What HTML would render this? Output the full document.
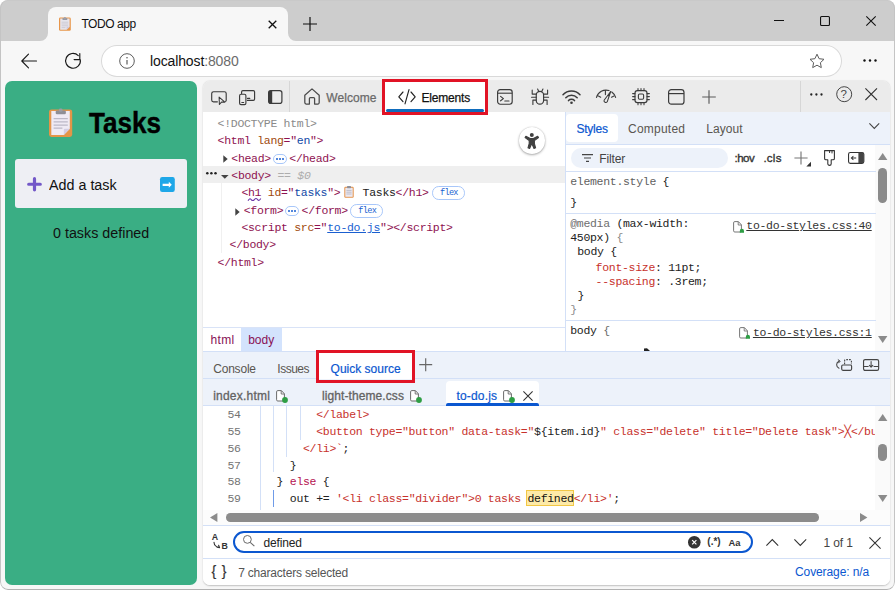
<!DOCTYPE html>
<html lang="en">
<head>
<meta charset="utf-8">
<title>TODO app</title>
<style>
*{box-sizing:border-box;margin:0;padding:0}
html,body{width:895px;height:590px;overflow:hidden;background:#fff}
body{font-family:"Liberation Sans",sans-serif;font-size:12px;color:#1b1b1b;position:relative}
.abs{position:absolute}
.t{position:absolute;white-space:pre;line-height:1}
.mono{font-family:"Liberation Mono",monospace}
svg{position:absolute;overflow:visible}
#win{position:absolute;left:0;top:0;width:895px;height:590px;background:#f7f7f7;border-radius:8px;overflow:hidden}
#winb{position:absolute;left:0;top:0;width:895px;height:590px;border-radius:8px;border:1px solid #c4c4c4;border-top-color:#c9c9c9;border-bottom-color:#b2b2b2}
.tg{color:#8e1150}.an{color:#a04a0c}.av{color:#0f48a6}.gr{color:#8a8a8a}
.rd{color:#c7312c}.dk{color:#222}
</style>
</head>
<body>
<div id="win">
<div class="abs" style="left:0px;top:0px;width:895px;height:41px;background:#cdcdcd;"></div>
<div class="abs" style="left:48px;top:7px;width:240px;height:34px;background:#f7f7f7;border-radius:8px 8px 0 0"></div>
<svg style="left:40px;top:33px;" width="8" height="8" viewBox="0 0 8 8"><path d="M8 0V8H0A8 8 0 0 0 8 0Z" fill="#f7f7f7"/></svg>
<svg style="left:288px;top:33px;" width="8" height="8" viewBox="0 0 8 8"><path d="M0 0V8H8A8 8 0 0 1 0 0Z" fill="#f7f7f7"/></svg>
<svg style="left:59px;top:17px;" width="12" height="14" viewBox="0 0 12 14"><rect x="0" y="0.6" width="11.8" height="13.2" rx="1.4" fill="#e8964a"/>
<path d="M1.2 1.6H10.6V9.8L7.6 12.8H1.2Z" fill="#e6e4ec"/>
<path d="M7.6 12.8V9.8H10.6Z" fill="#cfc9df"/>
<rect x="3.4" y="0.9" width="5" height="2" rx="0.7" fill="#9a9aa2"/>
<rect x="4.9" y="0" width="2" height="1.8" rx="0.7" fill="#a5a5ad"/>
<path d="M2.6 5.2h6.6M2.6 7h6.6M2.6 8.8h6.6M2.6 10.6h3.8" stroke="#c4c2cc" stroke-width="0.7"/></svg>
<div class="t" id="tabtitle" style="left:81.40px;top:18.24px;font-size:12px;color:#111;letter-spacing:-0.43px;">TODO app</div>
<svg style="left:268px;top:20px;" width="9" height="9" viewBox="0 0 9 9"><path d="M0.7 0.7L8.3 8.3M8.3 0.7L0.7 8.3" stroke="#111" stroke-width="1.3" fill="none"/></svg>
<svg style="left:303px;top:17px;" width="14" height="14" viewBox="0 0 14 14"><path d="M7 0V14M0 7H14" stroke="#111" stroke-width="1.2" fill="none"/></svg>
<div class="abs" style="left:774px;top:20px;width:10px;height:1px;background:#111;"></div>
<svg style="left:820px;top:16px;" width="10" height="10" viewBox="0 0 10 10"><rect x="0.55" y="0.55" width="8.9" height="8.9" rx="1" fill="none" stroke="#111" stroke-width="1.1"/></svg>
<svg style="left:866px;top:16px;" width="10" height="10" viewBox="0 0 10 10"><path d="M0.3 0.3L9.7 9.7M9.7 0.3L0.3 9.7" stroke="#111" stroke-width="1.1"/></svg>
<svg style="left:21px;top:53px;" width="16" height="16" viewBox="0 0 16 16"><path d="M15.5 8H1M7.5 1.2L0.8 8L7.5 14.8" stroke="#1a1a1a" stroke-width="1.15" fill="none" stroke-linecap="round" stroke-linejoin="round"/></svg>
<svg style="left:65px;top:53px;" width="16" height="16" viewBox="0 0 16 16"><path d="M15.33 6.77A7.4 7.4 0 1 1 13.28 2.61" stroke="#1a1a1a" stroke-width="1.15" fill="none" stroke-linecap="round"/><path d="M14.8 0.6V6.6H9.1" stroke="#1a1a1a" stroke-width="1.15" fill="none" stroke-linecap="round" stroke-linejoin="round"/></svg>
<div class="abs" style="left:101px;top:45px;width:741px;height:32px;background:#fff;border-radius:16px;box-shadow:inset 0 0 0 1px #d9d9d9"></div>
<svg style="left:119px;top:53px;" width="16" height="16" viewBox="0 0 16 16"><circle cx="8" cy="8" r="7.3" fill="none" stroke="#5c5c5c" stroke-width="1"/><path d="M8 7V11.6" stroke="#5c5c5c" stroke-width="1.2"/><circle cx="8" cy="4.8" r="0.8" fill="#5c5c5c"/></svg>
<div class="t" id="url" style="left:150.00px;top:54.15px;font-size:14px;color:#111;letter-spacing:-0.12px;">localhost<span style="color:#6b6b6b">:8080</span></div>
<svg style="left:809px;top:53px;" width="16" height="16" viewBox="0 0 16 16"><path d="M8 1.2L10.1 5.7L15 6.3L11.4 9.7L12.3 14.6L8 12.2L3.7 14.6L4.6 9.7L1 6.3L5.9 5.7Z" fill="none" stroke="#5c5c5c" stroke-width="1" stroke-linejoin="round"/></svg>
<svg style="left:863px;top:59px;" width="14" height="3" viewBox="0 0 14 3"><circle cx="1.5" cy="1.5" r="1.2" fill="#111"/><circle cx="7" cy="1.5" r="1.2" fill="#111"/><circle cx="12.5" cy="1.5" r="1.2" fill="#111"/></svg>
<div class="abs" style="left:5px;top:81px;width:192px;height:504px;background:#3aae84;border-radius:7px"></div>
<svg style="left:49px;top:108px;" width="24" height="30" viewBox="0 0 24 30"><rect x="0" y="1.4" width="23.2" height="27.6" rx="2.4" fill="#e39548"/>
<path d="M2.3 2.9H20.8V20.8L14.8 26.9H2.3Z" fill="#efeaf4"/>
<path d="M14.8 26.9V22A1.2 1.2 0 0 1 16 20.8H20.8Z" fill="#d3cde4"/>
<rect x="6.7" y="2.4" width="10.2" height="3.8" rx="1.3" fill="#8e8e96"/>
<rect x="9.9" y="0.4" width="3.6" height="3.4" rx="1.4" fill="#9c9ca4"/>
<path d="M4.6 10.6h14.2M4.6 13.8h14.2M4.6 17h14.2M4.6 20.2h8.8" stroke="#bcb8c6" stroke-width="1.25"/></svg>
<div class="t" id="h1" style="left:89.20px;top:107.07px;font-size:30.4px;color:#000;font-weight:bold;transform-origin:0 0;transform:scaleX(0.858);-webkit-text-stroke:0.4px #000;">Tasks</div>
<div class="abs" style="left:15px;top:159px;width:172px;height:49px;background:#eeeff4;border-radius:3px"></div>
<svg style="left:26.9px;top:177.4px;" width="15" height="14.5" viewBox="0 0 15 14.5"><path d="M7.5 1.7V12.8M1.7 7.25H13.3" stroke="#7358c8" stroke-width="3.2" stroke-linecap="round" fill="none"/></svg>
<div class="t" id="addtask" style="left:48.80px;top:177.36px;font-size:15.4px;color:#111;letter-spacing:0px;transform-origin:0 0;transform:scaleX(0.93);">Add a task</div>
<svg style="left:160.4px;top:177.2px;" width="14.8" height="14.9" viewBox="0 0 14.8 14.9"><rect width="14.8" height="14.9" rx="2.2" fill="#1ea7e8"/><path d="M2.6 6.7H8.8V4.8L11.8 7.8L8.8 10.8V8.9H2.6Z" fill="#fff"/></svg>
<div class="t" id="ntasks" style="left:52.80px;top:224.86px;font-size:15.4px;color:#111;letter-spacing:0px;transform-origin:0 0;transform:scaleX(0.93);">0 tasks defined</div>
<div class="abs" style="left:203px;top:81px;width:687px;height:504px;background:#fff;border-radius:7px;box-shadow:0 0.6px 1.6px rgba(0,0,0,.22)"></div>
<div class="abs" style="left:203px;top:81px;width:687px;height:31px;background:#ebebeb;border-radius:7px 7px 0 0"></div>
<svg style="left:211px;top:91px;" width="16" height="14" viewBox="0 0 16 14"><path d="M6.4 10.8H2.5A1.8 1.8 0 0 1 0.7 9V2.5A1.8 1.8 0 0 1 2.5 0.7H13.4A1.8 1.8 0 0 1 15.2 2.5V9.2A1.6 1.6 0 0 1 14.6 10.4" fill="none" stroke="#3b3b3b" stroke-width="1.15" stroke-linecap="round"/><path d="M8.1 6.1L8.4 13.5L10.5 11.1H13.9Z" fill="none" stroke="#3b3b3b" stroke-width="1.05" stroke-linejoin="round"/></svg>
<svg style="left:239px;top:90px;" width="16.4" height="15.2" viewBox="0 0 16.4 15.2"><path d="M2.6 3.6V1.9A1.3 1.3 0 0 1 3.9 0.6H14.3A1.3 1.3 0 0 1 15.6 1.9V9.1A1.3 1.3 0 0 1 14.3 10.4H8.4" fill="none" stroke="#3b3b3b" stroke-width="1.15" stroke-linecap="round"/><rect x="0.6" y="4.3" width="6.3" height="10.3" rx="1.4" fill="none" stroke="#3b3b3b" stroke-width="1.15"/><path d="M2.8 12.5H4.7M8.5 8.4H10.8" stroke="#3b3b3b" stroke-width="1.05" stroke-linecap="round"/></svg>
<svg style="left:268px;top:90px;" width="15" height="14" viewBox="0 0 15 14"><rect x="0.6" y="0.6" width="13.3" height="12.8" rx="2.2" fill="none" stroke="#3b3b3b" stroke-width="1.2"/><path d="M2.6 0.6H4.2V13.4H2.6A2 2 0 0 1 0.6 11.4V2.6A2 2 0 0 1 2.6 0.6Z" fill="#3b3b3b"/></svg>
<div class="abs" style="left:289px;top:81px;width:1px;height:31px;background:#d6d6d6;"></div>
<svg style="left:304px;top:88px;" width="16" height="17" viewBox="0 0 16 17"><path d="M0.8 7.2L8 0.9L15.2 7.2V14.6A1.4 1.4 0 0 1 13.8 16H10.6V10.6A1 1 0 0 0 9.6 9.6H6.4A1 1 0 0 0 5.4 10.6V16H2.2A1.4 1.4 0 0 1 0.8 14.6Z" fill="none" stroke="#4a4a4a" stroke-width="1.25" stroke-linejoin="round"/></svg>
<div class="t" id="welcome" style="left:326.30px;top:91.84px;font-size:12px;color:#6a6a6a;letter-spacing:0.05px;-webkit-text-stroke:0.25px #6a6a6a;">Welcome</div>
<div class="abs" style="left:385px;top:82px;width:100px;height:30px;background:#fff;"></div>
<div class="abs" style="left:386px;top:109px;width:98px;height:3px;background:#0f6cbd;border-radius:1.5px"></div>
<svg style="left:398px;top:89px;" width="18" height="15.4" viewBox="0 0 18 15.4"><path d="M5 3L0.8 7.8L5 12.6M13 3L17.2 7.8L13 12.6M11 0.6L7 14.8" fill="none" stroke="#222" stroke-width="1.15" stroke-linecap="round" stroke-linejoin="round"/></svg>
<div class="t" id="elements" style="left:421.50px;top:92.04px;font-size:12px;color:#111;letter-spacing:-0.19px;-webkit-text-stroke:0.25px #111;">Elements</div>
<svg style="left:497px;top:89px;" width="16" height="16" viewBox="0 0 16 16"><rect x="0.6" y="0.6" width="14.6" height="14.6" rx="2.6" fill="none" stroke="#3b3b3b" stroke-width="1.15"/><path d="M0.6 4.2H15.2" stroke="#3b3b3b" stroke-width="1.1"/><path d="M3.6 7.4L6.4 9.6L3.6 11.8M7.8 12H12" fill="none" stroke="#3b3b3b" stroke-width="1.15" stroke-linecap="round" stroke-linejoin="round"/></svg>
<svg style="left:531px;top:88px;" width="18" height="17" viewBox="0 0 18 17"><rect x="5.25" y="3.4" width="7.35" height="12.7" rx="3.67" fill="none" stroke="#3b3b3b" stroke-width="1.15"/><path d="M6.6 1.1L7.9 3.8M11.95 1.1L10.6 3.8M5.25 6.1H1.2V2M12.6 6.1H16.6V2M0.55 9.2H5.25M12.6 9.2H17.6M5.25 12.1H1.9V16.4M12.6 12.1H16.1V16.4" fill="none" stroke="#3b3b3b" stroke-width="1.1" stroke-linecap="round" stroke-linejoin="round"/></svg>
<svg style="left:562px;top:90px;" width="19" height="14" viewBox="0 0 19 14"><path d="M1 4.8A11.6 11.6 0 0 1 18 4.8M3.8 7.8A7.8 7.8 0 0 1 15.2 7.8M6.5 10.6A4.2 4.2 0 0 1 12.5 10.6" fill="none" stroke="#3b3b3b" stroke-width="1.5" stroke-linecap="round"/><circle cx="9.5" cy="12.7" r="1.3" fill="#3b3b3b"/></svg>
<svg style="left:596px;top:89px;" width="20" height="14" viewBox="0 0 20 14"><path d="M0.5 8.4A9.87 9.87 0 0 1 13 1.57M15.8 2.98A9.87 9.87 0 0 1 19.6 8.4" fill="none" stroke="#3b3b3b" stroke-width="1.15" stroke-linecap="round"/><path d="M9.4 1.5V5.6M2.5 7L4.7 8.2M17.95 7L15.5 8.2" fill="none" stroke="#3b3b3b" stroke-width="1.1" stroke-linecap="round"/><path d="M14.7 2.5L8.1 11.3A1.75 1.75 0 0 0 11.2 12.8Z" fill="none" stroke="#3b3b3b" stroke-width="1.05" stroke-linejoin="round"/><path d="M14.7 2.5L11.6 6.8L12.9 7.4Z" fill="#3b3b3b"/></svg>
<svg style="left:632px;top:88px;" width="18" height="17" viewBox="0 0 18 17"><rect x="3" y="2.6" width="12" height="12" rx="2.4" fill="none" stroke="#3b3b3b" stroke-width="1.15"/><rect x="6.4" y="6" width="5.2" height="5.2" rx="1.2" fill="none" stroke="#3b3b3b" stroke-width="1.1"/><path d="M6 0.4V2.6M9 0.4V2.6M12 0.4V2.6M6 14.6V16.8M9 14.6V16.8M12 14.6V16.8M0.6 5.6H3M0.6 8.6H3M0.6 11.6H3M15 5.6H17.4M15 8.6H17.4M15 11.6H17.4" stroke="#3b3b3b" stroke-width="1.05" stroke-linecap="round"/></svg>
<svg style="left:667.5px;top:89px;" width="17" height="16" viewBox="0 0 17 16"><rect x="0.6" y="0.6" width="15.4" height="14.6" rx="2.8" fill="none" stroke="#3b3b3b" stroke-width="1.2"/><path d="M0.6 4.6H16" stroke="#3b3b3b" stroke-width="1.2"/></svg>
<svg style="left:702px;top:90px;" width="14" height="14" viewBox="0 0 14 14"><path d="M7 0.2V13.8M0.2 7H13.8" stroke="#5a5a5a" stroke-width="1.15"/></svg>
<div class="abs" style="left:800px;top:81px;width:1px;height:31px;background:#d6d6d6;"></div>
<svg style="left:810px;top:92.7px;" width="13" height="3" viewBox="0 0 13 3"><circle cx="1.3" cy="1.5" r="1.15" fill="#222"/><circle cx="6.4" cy="1.5" r="1.15" fill="#222"/><circle cx="11.5" cy="1.5" r="1.15" fill="#222"/></svg>
<svg style="left:835.6px;top:86.2px;" width="16.4" height="16.4" viewBox="0 0 16.4 16.4"><circle cx="8.2" cy="8.2" r="7.5" fill="none" stroke="#444" stroke-width="1"/></svg>
<div class="t" id="help" style="left:840.60px;top:88.87px;font-size:11.5px;color:#444;">?</div>
<svg style="left:864.6px;top:87.9px;" width="12.4" height="12.4" viewBox="0 0 12.4 12.4"><path d="M0.4 0.4L12 12M12 0.4L0.4 12" stroke="#333" stroke-width="1.1"/></svg>
<div class="abs" style="left:203px;top:166px;width:362px;height:16.6px;background:#efefef;"></div>
<div class="abs" style="left:221px;top:183px;width:1px;height:69.5px;background:#f0f0f0;"></div>
<div class="t mono" id="l1" style="left:217.60px;top:117.68px;font-size:11.5px;color:#222;letter-spacing:-0.3px;"><span class="gr">&lt;!DOCTYPE html&gt;</span></div>
<div class="t mono" id="l2" style="left:217.60px;top:134.98px;font-size:11.5px;color:#222;letter-spacing:-0.3px;"><span class="tg">&lt;html </span><span class="an">lang</span><span class="tg">="</span><span class="av">en</span><span class="tg">"&gt;</span></div>
<svg style="left:222.8px;top:155.2px;" width="5" height="8" viewBox="0 0 5 8"><path d="M0.3 0.3L4.7 4L0.3 7.7Z" fill="#444"/></svg>
<div class="t mono" id="l3" style="left:231.30px;top:153.08px;font-size:11.5px;color:#222;letter-spacing:-0.3px;"><span class="tg">&lt;head&gt;</span></div>
<div class="t mono" id="l3b" style="left:289.30px;top:153.08px;font-size:11.5px;color:#222;letter-spacing:-0.3px;"><span class="tg">&lt;/head&gt;</span></div>
<div class="abs" style="left:273px;top:154px;width:14px;height:10px;background:#fff;border:1px solid #a8c7fa;border-radius:5px"></div>
<svg style="left:276px;top:158px;" width="8" height="2" viewBox="0 0 8 2"><circle cx="1" cy="1" r="1" fill="#1a5fd0"/><circle cx="4" cy="1" r="1" fill="#1a5fd0"/><circle cx="7" cy="1" r="1" fill="#1a5fd0"/></svg>
<svg style="left:205.8px;top:172.2px;" width="11" height="3" viewBox="0 0 11 3"><circle cx="1.3" cy="1.3" r="1.25" fill="#222"/><circle cx="5.4" cy="1.3" r="1.25" fill="#222"/><circle cx="9.5" cy="1.3" r="1.25" fill="#222"/></svg>
<svg style="left:221px;top:174.8px;" width="7.6" height="3.8" viewBox="0 0 7.6 3.8"><path d="M0 0.1H7.6L3.8 3.8Z" fill="#444"/></svg>
<div class="t mono" id="l4" style="left:231.30px;top:169.58px;font-size:11.5px;color:#222;letter-spacing:-0.3px;"><span class="tg">&lt;body&gt;</span><span style="color:#adadad;font-style:italic"> == $0</span></div>
<div class="t mono" id="l5" style="left:241.40px;top:186.88px;font-size:11.5px;color:#222;letter-spacing:-0.3px;"><span class="tg">&lt;h1 </span><span class="an">id</span><span class="tg">="</span><span class="av">tasks</span><span class="tg">"&gt;</span></div>
<svg style="left:248px;top:198px;" width="13" height="3.4" viewBox="0 0 13 3.4"><path d="M0 2.8Q1.6 -0.4 3.2 1.6T6.4 1.6T9.6 1.6T12.8 0.6" fill="none" stroke="#6d3aa8" stroke-width="1.05"/></svg>
<svg style="left:343.6px;top:185.8px;" width="10" height="12" viewBox="0 0 10 12"><rect x="0.3" y="0.8" width="9.4" height="11" rx="1.2" fill="#e3924b"/><rect x="1.3" y="1.8" width="7.4" height="9" fill="#ebe8f0"/><rect x="3" y="0" width="4" height="2.2" rx="0.6" fill="#8f8f98"/><path d="M2.4 4.4h5.2M2.4 6.2h5.2M2.4 8h5.2" stroke="#b4b2c0" stroke-width="0.8"/></svg>
<div class="t mono" id="l5b" style="left:362.60px;top:186.88px;font-size:11.5px;color:#222;letter-spacing:-0.3px;">Tasks<span class="tg">&lt;/h1&gt;</span></div>
<div class="abs" style="left:432px;top:186.3px;width:32.7px;height:13.5px;background:#fff;border:1px solid #a8c7fa;border-radius:6.75px"></div>
<div class="t mono" id="fx1" style="left:440.00px;top:189.00px;font-size:8.6px;color:#1a5fd0;letter-spacing:-0.7px;">flex</div>
<svg style="left:235px;top:207.6px;" width="5" height="8" viewBox="0 0 5 8"><path d="M0.3 0.3L4.7 4L0.3 7.7Z" fill="#444"/></svg>
<div class="t mono" id="l6" style="left:243.70px;top:204.98px;font-size:11.5px;color:#222;letter-spacing:-0.3px;"><span class="tg">&lt;form&gt;</span></div>
<div class="abs" style="left:284.8px;top:205.8px;width:14px;height:10px;background:#fff;border:1px solid #a8c7fa;border-radius:5px"></div>
<svg style="left:287.8px;top:209.8px;" width="8" height="2" viewBox="0 0 8 2"><circle cx="1" cy="1" r="1" fill="#1a5fd0"/><circle cx="4" cy="1" r="1" fill="#1a5fd0"/><circle cx="7" cy="1" r="1" fill="#1a5fd0"/></svg>
<div class="t mono" id="l6b" style="left:301.60px;top:204.98px;font-size:11.5px;color:#222;letter-spacing:-0.3px;"><span class="tg">&lt;/form&gt;</span></div>
<div class="abs" style="left:350.3px;top:204.3px;width:32.7px;height:13.5px;background:#fff;border:1px solid #a8c7fa;border-radius:6.75px"></div>
<div class="t mono" id="fx2" style="left:358.30px;top:207.00px;font-size:8.6px;color:#1a5fd0;letter-spacing:-0.7px;">flex</div>
<div class="t mono" id="l7" style="left:241.40px;top:221.88px;font-size:11.5px;color:#222;letter-spacing:-0.3px;"><span class="tg">&lt;script </span><span class="an">src</span><span class="tg">="</span><span style="color:#1a5fd0;text-decoration:underline">to-do.js</span><span class="tg">"&gt;&lt;/script&gt;</span></div>
<div class="t mono" id="l8" style="left:229.60px;top:238.68px;font-size:11.5px;color:#222;letter-spacing:-0.3px;"><span class="tg">&lt;/body&gt;</span></div>
<div class="t mono" id="l9" style="left:217.60px;top:257.18px;font-size:11.5px;color:#222;letter-spacing:-0.3px;"><span class="tg">&lt;/html&gt;</span></div>
<div class="abs" style="left:519px;top:127.4px;width:26.4px;height:26.4px;border-radius:50%;background:#fff;box-shadow:0 1px 2.5px rgba(0,0,0,.32),0 0 1px rgba(0,0,0,.25)"></div>
<svg style="left:524.2px;top:132.6px;" width="16" height="17" viewBox="0 0 16 17"><circle cx="7.8" cy="2.1" r="2" fill="#404040"/><path d="M1.9 3.3L6.2 5.6H9.4L13.7 3.3L14.5 4.6L10.4 7.6V10.6L11.6 14.8L10 15.4L7.8 10.6L5.6 15.4L4 14.8L5.2 10.6V7.6L1.1 4.6Z" fill="#404040" stroke="#404040" stroke-width="1.1" stroke-linejoin="round"/></svg>
<div class="abs" style="left:203px;top:327px;width:362px;height:1px;background:#d9e3f7;"></div>
<div class="abs" style="left:241.3px;top:328px;width:40.5px;height:23px;background:#d3e3fd;"></div>
<div class="t" id="bc1" style="left:210.60px;top:333.94px;font-size:12px;color:#881156;letter-spacing:0.3px;">html</div>
<div class="t" id="bc2" style="left:248.20px;top:333.94px;font-size:12px;color:#881156;">body</div>
<div class="abs" style="left:565px;top:112px;width:1px;height:239px;background:#d3e0f7;"></div>
<div class="abs" style="left:566px;top:112px;width:324px;height:32px;background:#edf2fa;"></div>
<div class="abs" style="left:566px;top:114px;width:52px;height:28px;background:#fff;border-radius:4px"></div>
<div class="t" id="st1" style="left:576.40px;top:122.64px;font-size:12px;color:#0b57d0;letter-spacing:-0.22px;-webkit-text-stroke:0.2px #0b57d0;">Styles</div>
<div class="t" id="st2" style="left:628.00px;top:122.64px;font-size:12px;color:#5a5650;letter-spacing:0.23px;">Computed</div>
<div class="t" id="st3" style="left:706.20px;top:122.64px;font-size:12px;color:#5a5650;letter-spacing:0.06px;">Layout</div>
<svg style="left:869px;top:122.6px;" width="11" height="6" viewBox="0 0 11 6"><path d="M0.4 0.4L5.3 5.4L10.2 0.4" fill="none" stroke="#444" stroke-width="1.1"/></svg>
<div class="abs" style="left:566px;top:144px;width:324px;height:1px;background:#d3e0f7;"></div>
<div class="abs" style="left:571px;top:147.8px;width:156.5px;height:20px;background:#edf2fa;border-radius:10px"></div>
<svg style="left:581.5px;top:154.2px;" width="11" height="8" viewBox="0 0 11 8"><path d="M0 0.6H11M2 4H9M4 7.4H7" stroke="#444" stroke-width="1.2"/></svg>
<div class="t" id="filter" style="left:599.30px;top:152.84px;font-size:12px;color:#444;letter-spacing:-0.12px;">Filter</div>
<div class="t" id="hov" style="left:734.40px;top:152.77px;font-size:11.5px;color:#333;letter-spacing:-0.45px;-webkit-text-stroke:0.35px #333;">:hov</div>
<div class="t" id="cls" style="left:763.40px;top:152.77px;font-size:11.5px;color:#333;letter-spacing:0.25px;-webkit-text-stroke:0.35px #333;">.cls</div>
<svg style="left:794px;top:151px;" width="17" height="16" viewBox="0 0 17 16"><path d="M7 0.4V13.6M0.4 7H13.6" stroke="#777" stroke-width="1.15"/><path d="M17 10.8V15.5H12.3Z" fill="#333"/></svg>
<svg style="left:823.5px;top:150px;" width="11" height="16" viewBox="0 0 11 16"><path d="M0.6 0.6H10.4V8.4A1.3 1.3 0 0 1 9.1 9.7H7.2V13.7A1.7 1.7 0 0 1 3.8 13.7V9.7H1.9A1.3 1.3 0 0 1 0.6 8.4Z" fill="none" stroke="#333" stroke-width="1.1" stroke-linejoin="round"/><path d="M5.6 0.6V3M8 0.6V3.4" stroke="#333" stroke-width="1"/></svg>
<svg style="left:848px;top:152.2px;" width="16.4" height="12" viewBox="0 0 16.4 12"><rect x="0.55" y="0.55" width="15.3" height="10.8" rx="1.8" fill="none" stroke="#333" stroke-width="1.1"/><path d="M10.4 0.6H14A1.8 1.8 0 0 1 15.8 2.4V9.5A1.8 1.8 0 0 1 14 11.3H10.4Z" fill="#444"/><path d="M8.2 6H3.6M5.4 4L3.4 6L5.4 8" fill="none" stroke="#333" stroke-width="1.05" /></svg>
<div class="abs" style="left:875.4px;top:145px;width:14.6px;height:206px;background:#fafafa;"></div>
<svg style="left:878px;top:152.8px;" width="9.4" height="7" viewBox="0 0 9.4 7"><path d="M0 7L4.7 0L9.4 7Z" fill="#8b8b8b"/></svg>
<div class="abs" style="left:878px;top:168px;width:8.8px;height:35px;background:#8b8b8b;border-radius:4.4px"></div>
<svg style="left:878px;top:336px;" width="9.4" height="7" viewBox="0 0 9.4 7"><path d="M0 0L4.7 7L9.4 0Z" fill="#8b8b8b"/></svg>
<div class="abs" style="left:566px;top:171px;width:310px;height:1px;background:#d3e0f7;"></div>
<div class="abs" style="left:566px;top:213px;width:310px;height:1px;background:#d3e0f7;"></div>
<div class="abs" style="left:566px;top:320px;width:310px;height:1px;background:#d3e0f7;"></div>
<div class="t mono" id="s1" style="left:570.20px;top:176.08px;font-size:11.5px;color:#222;letter-spacing:-0.3px;"><span style="color:#5f5f5f">element.style</span> {</div>
<div class="t mono" id="s2" style="left:570.20px;top:196.88px;font-size:11.5px;color:#222;letter-spacing:-0.3px;">}</div>
<div class="t mono" id="s3" style="left:570.20px;top:217.88px;font-size:11.5px;color:#222;letter-spacing:-0.3px;"><span style="color:#6e6e6e">@media</span> (max-width:</div>
<div class="t mono" id="s4" style="left:570.20px;top:231.68px;font-size:11.5px;color:#222;letter-spacing:-0.3px;">450px) <span style="color:#8a8a8a">{</span></div>
<div class="t mono" id="s5" style="left:577.20px;top:245.88px;font-size:11.5px;color:#222;letter-spacing:-0.3px;">body {</div>
<div class="t mono" id="s6" style="left:595.60px;top:261.78px;font-size:11.5px;color:#222;letter-spacing:-0.3px;"><span class="rd">font-size</span>: 11pt;</div>
<div class="t mono" id="s7" style="left:595.60px;top:275.98px;font-size:11.5px;color:#222;letter-spacing:-0.3px;"><span class="rd">--spacing</span>: .3rem;</div>
<div class="t mono" id="s8" style="left:577.60px;top:290.18px;font-size:11.5px;color:#222;letter-spacing:-0.3px;">}</div>
<div class="t mono" id="s9" style="left:570.20px;top:303.88px;font-size:11.5px;color:#222;letter-spacing:-0.3px;"><span style="color:#8a8a8a">}</span></div>
<div class="t mono" id="s10" style="left:570.20px;top:325.38px;font-size:11.5px;color:#222;letter-spacing:-0.3px;">body <span style="color:#6a6a6a">{</span></div>
<svg style="left:732.8px;top:220.6px;" width="11" height="12" viewBox="0 0 11 12"><path d="M0.6 1.8A1.2 1.2 0 0 1 1.8 0.6H5.4L8.4 3.8V9.8A1.2 1.2 0 0 1 7.2 11H1.8A1.2 1.2 0 0 1 0.6 9.8Z" fill="#fff" stroke="#666" stroke-width="0.9"/><path d="M5.2 0.8V4H8.2" fill="none" stroke="#666" stroke-width="0.8"/><path d="M6.8 11.7V9.9A2.1 2.1 0 0 1 11 9.9V11.7Z" fill="#2e9e44"/></svg>
<div class="t mono" id="lk1" style="left:746.30px;top:220.18px;font-size:11.5px;color:#222;letter-spacing:-0.3px;"><span style="color:#333;text-decoration:underline">to-do-styles.css:40</span></div>
<svg style="left:738.6px;top:327.4px;" width="11" height="12" viewBox="0 0 11 12"><path d="M0.6 1.8A1.2 1.2 0 0 1 1.8 0.6H5.4L8.4 3.8V9.8A1.2 1.2 0 0 1 7.2 11H1.8A1.2 1.2 0 0 1 0.6 9.8Z" fill="#fff" stroke="#666" stroke-width="0.9"/><path d="M5.2 0.8V4H8.2" fill="none" stroke="#666" stroke-width="0.8"/><path d="M6.8 11.7V9.9A2.1 2.1 0 0 1 11 9.9V11.7Z" fill="#2e9e44"/></svg>
<div class="t mono" id="lk2" style="left:752.90px;top:326.98px;font-size:11.5px;color:#222;letter-spacing:-0.3px;"><span style="color:#333;text-decoration:underline">to-do-styles.css:1</span></div>
<svg style="left:643.5px;top:347.6px;" width="6" height="3" viewBox="0 0 6 3"><path d="M0 3V0.4L3 0.2L6 3Z" fill="#222"/></svg>
<div class="abs" style="left:203px;top:351px;width:687px;height:55px;background:#edf2fa;"></div>
<div class="abs" style="left:203px;top:351px;width:687px;height:1px;background:#d3e0f7;"></div>
<div class="abs" style="left:203px;top:378px;width:687px;height:1px;background:#d3e0f7;"></div>
<div class="abs" style="left:203px;top:405px;width:687px;height:1px;background:#d3e0f7;"></div>
<div class="t" id="dr1" style="left:213.20px;top:363.24px;font-size:12px;color:#5a5650;letter-spacing:-0.2px;">Console</div>
<div class="t" id="dr2" style="left:277.30px;top:363.24px;font-size:12px;color:#5a5650;letter-spacing:-0.5px;">Issues</div>
<div class="abs" style="left:319px;top:353px;width:93px;height:26.4px;background:#fff;"></div>
<div class="t" id="dr3" style="left:330.60px;top:363.24px;font-size:12px;color:#0b57d0;-webkit-text-stroke:0.2px #0b57d0;">Quick source</div>
<svg style="left:419.4px;top:358px;" width="13.4" height="13.4" viewBox="0 0 13.4 13.4"><path d="M6.7 0.2V13.2M0.2 6.7H13.2" stroke="#666" stroke-width="1.15"/></svg>
<svg style="left:836px;top:359px;" width="16" height="12" viewBox="0 0 16 12"><path d="M8.6 5.2V1.7A1.1 1.1 0 0 1 9.7 0.6H14.3A1.1 1.1 0 0 1 15.4 1.7V5.2" fill="none" stroke="#444" stroke-width="1.1" stroke-dasharray="1.7 1.1"/><rect x="5.7" y="6" width="9.9" height="5.3" rx="1.2" fill="none" stroke="#444" stroke-width="1.15"/><path d="M3 9.2A3.7 3.7 0 0 1 3 2.3" fill="none" stroke="#444" stroke-width="1.05" stroke-linecap="round"/><path d="M2.2 0.8L4.2 2.2L2.6 3.9" fill="none" stroke="#444" stroke-width="1" stroke-linecap="round" stroke-linejoin="round"/></svg>
<svg style="left:863px;top:359px;" width="16.2" height="12" viewBox="0 0 16.2 12"><rect x="0.55" y="0.55" width="15.1" height="10.9" rx="1.6" fill="none" stroke="#444" stroke-width="1.15"/><path d="M0.6 7.5H5.6M10.6 7.5H15.6" stroke="#444" stroke-width="1.1"/><path d="M8.1 2.6V8M6.4 6.4L8.1 8.2L9.8 6.4" fill="none" stroke="#444" stroke-width="1.05" stroke-linecap="round" stroke-linejoin="round"/></svg>
<div class="t" id="ft1" style="left:213.20px;top:390.04px;font-size:12px;color:#636363;letter-spacing:0.22px;-webkit-text-stroke:0.3px #636363;">index.html</div>
<svg style="left:276px;top:389.8px;" width="10" height="12" viewBox="0 0 10 12"><path d="M0.6 1.8A1.2 1.2 0 0 1 1.8 0.6H5.4L8.4 3.8V9.8A1.2 1.2 0 0 1 7.2 11H1.8A1.2 1.2 0 0 1 0.6 9.8Z" fill="#fff" stroke="#6a6a6a" stroke-width="1"/><path d="M5.2 0.8V4H8.2" fill="none" stroke="#6a6a6a" stroke-width="0.9"/></svg>
<svg style="left:282.4px;top:397.2px;" width="6" height="6" viewBox="0 0 6 6"><circle cx="3" cy="3" r="2.9" fill="#2e9e44"/></svg>
<div class="t" id="ft2" style="left:322.00px;top:390.04px;font-size:12px;color:#636363;letter-spacing:0.09px;-webkit-text-stroke:0.3px #636363;">light-theme.css</div>
<svg style="left:409.6px;top:389.8px;" width="10" height="12" viewBox="0 0 10 12"><path d="M0.6 1.8A1.2 1.2 0 0 1 1.8 0.6H5.4L8.4 3.8V9.8A1.2 1.2 0 0 1 7.2 11H1.8A1.2 1.2 0 0 1 0.6 9.8Z" fill="#fff" stroke="#6a6a6a" stroke-width="1"/><path d="M5.2 0.8V4H8.2" fill="none" stroke="#6a6a6a" stroke-width="0.9"/></svg>
<svg style="left:416.0px;top:397.2px;" width="6" height="6" viewBox="0 0 6 6"><circle cx="3" cy="3" r="2.9" fill="#2e9e44"/></svg>
<div class="abs" style="left:446.3px;top:380.6px;width:92.5px;height:24.4px;background:#fff;border-radius:4px 4px 0 0"></div>
<div class="abs" style="left:446.3px;top:402.6px;width:92.5px;height:3.2px;background:#0b57d0;border-radius:2px 2px 0 0"></div>
<div class="t" id="ft3" style="left:456.40px;top:390.04px;font-size:12px;color:#0b57d0;letter-spacing:0.19px;-webkit-text-stroke:0.2px #0b57d0;">to-do.js</div>
<svg style="left:503px;top:389.8px;" width="10" height="12" viewBox="0 0 10 12"><path d="M0.6 1.8A1.2 1.2 0 0 1 1.8 0.6H5.4L8.4 3.8V9.8A1.2 1.2 0 0 1 7.2 11H1.8A1.2 1.2 0 0 1 0.6 9.8Z" fill="#fff" stroke="#6a6a6a" stroke-width="1"/><path d="M5.2 0.8V4H8.2" fill="none" stroke="#6a6a6a" stroke-width="0.9"/></svg>
<svg style="left:509.4px;top:397.2px;" width="6" height="6" viewBox="0 0 6 6"><circle cx="3" cy="3" r="2.9" fill="#2e9e44"/></svg>
<svg style="left:523px;top:390.6px;" width="10" height="10" viewBox="0 0 10 10"><path d="M0.4 0.4L9.6 9.6M9.6 0.4L0.4 9.6" stroke="#333" stroke-width="1.05"/></svg>
<div class="abs" style="left:203px;top:406px;width:687px;height:104px;background:#fff;"></div>
<div class="abs" style="left:260px;top:406px;width:1px;height:104px;background:#d3e0f7;"></div>
<div class="abs" style="left:273.3px;top:406px;width:1px;height:66px;background:#d3e0f7;"></div>
<div class="abs" style="left:286px;top:406px;width:1px;height:50.5px;background:#d3e0f7;"></div>
<div class="abs" style="left:300px;top:406px;width:1px;height:33.7px;background:#d3e0f7;"></div>
<div class="abs" style="left:273.3px;top:490px;width:1px;height:17px;background:#6f9be8;"></div>
<div class="t mono" id="n54" style="left:227.40px;top:409.18px;font-size:11.5px;color:#747474;letter-spacing:-0.3px;">54</div>
<div class="t mono" id="n55" style="left:227.40px;top:426.18px;font-size:11.5px;color:#747474;letter-spacing:-0.3px;">55</div>
<div class="t mono" id="n56" style="left:227.40px;top:443.18px;font-size:11.5px;color:#747474;letter-spacing:-0.3px;">56</div>
<div class="t mono" id="n57" style="left:227.40px;top:460.18px;font-size:11.5px;color:#747474;letter-spacing:-0.3px;">57</div>
<div class="t mono" id="n58" style="left:227.40px;top:476.18px;font-size:11.5px;color:#747474;letter-spacing:-0.3px;">58</div>
<div class="t mono" id="n59" style="left:227.40px;top:493.18px;font-size:11.5px;color:#747474;letter-spacing:-0.3px;">59</div>
<div class="t mono" id="c54" style="left:316.20px;top:409.18px;font-size:11.5px;color:#222;letter-spacing:-0.3px;"><span class="rd">&lt;/label&gt;</span></div>
<div class="t mono" id="c55" style="left:316.20px;top:426.18px;font-size:11.5px;color:#222;letter-spacing:-0.3px;"><span class="rd">&lt;button type="button" data-task="</span>${item.id}<span class="rd">" class="delete" title="Delete task"&gt;╳&lt;/bu</span></div>
<div class="t mono" id="c56" style="left:303.00px;top:443.18px;font-size:11.5px;color:#222;letter-spacing:-0.3px;"><span class="rd">&lt;/li&gt;`</span>;</div>
<div class="t mono" id="c57" style="left:289.80px;top:460.18px;font-size:11.5px;color:#222;letter-spacing:-0.3px;">}</div>
<div class="t mono" id="c58" style="left:276.60px;top:476.18px;font-size:11.5px;color:#222;letter-spacing:-0.3px;">} <span style="color:#b5124f">else</span> {</div>
<div class="abs" style="left:526.4px;top:490px;width:47.6px;height:15.8px;background:#fdeaa8;border:1px solid #f2c744"></div>
<div class="t mono" id="c59" style="left:289.80px;top:493.18px;font-size:11.5px;color:#222;letter-spacing:-0.3px;">out += <span class="rd">'&lt;li class="divider"&gt;0 tasks </span><span style="color:#111">defined</span><span class="rd">&lt;/li&gt;'</span>;</div>
<div class="abs" style="left:875.4px;top:406px;width:14.6px;height:104px;background:#fafafa;"></div>
<svg style="left:878px;top:413.6px;" width="9.4" height="7" viewBox="0 0 9.4 7"><path d="M0 7L4.7 0L9.4 7Z" fill="#8b8b8b"/></svg>
<div class="abs" style="left:878px;top:443.5px;width:8.8px;height:17px;background:#8b8b8b;border-radius:4.4px"></div>
<svg style="left:878px;top:495px;" width="9.4" height="7" viewBox="0 0 9.4 7"><path d="M0 0L4.7 7L9.4 0Z" fill="#8b8b8b"/></svg>
<div class="abs" style="left:203px;top:510px;width:687px;height:15px;background:#fcfcfc;"></div>
<svg style="left:210.4px;top:513px;" width="7.4" height="9" viewBox="0 0 7.4 9"><path d="M7.4 0L0 4.5L7.4 9Z" fill="#8b8b8b"/></svg>
<div class="abs" style="left:226.2px;top:513.2px;width:592.6px;height:8.6px;background:#8b8b8b;border-radius:4.3px"></div>
<svg style="left:859.8px;top:513px;" width="7.4" height="9" viewBox="0 0 7.4 9"><path d="M0 0L7.4 4.5L0 9Z" fill="#8b8b8b"/></svg>
<div class="abs" style="left:203px;top:525px;width:687px;height:1px;background:#d3e0f7;"></div>
<div class="abs" style="left:203px;top:526px;width:687px;height:32px;background:#fff;"></div>
<div class="t" id="ab1" style="left:211.70px;top:532.55px;font-size:8.8px;color:#333;font-weight:bold;">A</div>
<div class="t" id="ab2" style="left:221.60px;top:542.35px;font-size:8.8px;color:#333;font-weight:bold;">B</div>
<svg style="left:212.6px;top:542px;" width="8" height="7" viewBox="0 0 8 7"><path d="M1 0.4A5.4 5.4 0 0 0 6.4 5.4M6.6 5.6L4 5.2M6.6 5.6L5.6 3.2" fill="none" stroke="#333" stroke-width="1.1" stroke-linecap="round"/></svg>
<div class="abs" style="left:233.2px;top:530.8px;width:520px;height:22.4px;border:2px solid #0b57d0;border-radius:11.2px;background:#fff"></div>
<svg style="left:243.2px;top:535.2px;" width="12" height="12" viewBox="0 0 12 12"><circle cx="4.4" cy="4.4" r="3.9" fill="none" stroke="#6a6a6a" stroke-width="1"/><path d="M7.2 7.3L11.4 11.2" stroke="#6a6a6a" stroke-width="1.1"/></svg>
<div class="t" id="srch" style="left:263.40px;top:537.14px;font-size:12px;color:#222;letter-spacing:-0.13px;">defined</div>
<svg style="left:687.6px;top:535.8px;" width="12.6" height="12.6" viewBox="0 0 12.6 12.6"><circle cx="6.3" cy="6.3" r="6.3" fill="#333"/><path d="M4.2 4.2L8.4 8.4M8.4 4.2L4.2 8.4" stroke="#fff" stroke-width="1.2"/></svg>
<div class="t" id="re" style="left:707.30px;top:537.13px;font-size:10px;color:#333;font-weight:bold;">(.*)</div>
<div class="t" id="aa" style="left:728.60px;top:537.64px;font-size:9.4px;color:#333;font-weight:bold;">Aa</div>
<svg style="left:765.7px;top:538.5px;" width="12.6" height="7" viewBox="0 0 12.6 7"><path d="M0.4 6.6L6.3 0.6L12.2 6.6" fill="none" stroke="#333" stroke-width="1.1"/></svg>
<svg style="left:793.8px;top:538.5px;" width="12.6" height="7" viewBox="0 0 12.6 7"><path d="M0.4 0.4L6.3 6.4L12.2 0.4" fill="none" stroke="#333" stroke-width="1.1"/></svg>
<div class="t" id="cnt" style="left:823.40px;top:536.84px;font-size:12px;color:#444;letter-spacing:-0.08px;">1 of 1</div>
<svg style="left:869px;top:536.7px;" width="12" height="12" viewBox="0 0 12 12"><path d="M0.4 0.4L11.6 11.6M11.6 0.4L0.4 11.6" stroke="#333" stroke-width="1.05"/></svg>
<div class="abs" style="left:203px;top:558px;width:687px;height:1px;background:#d3e0f7;"></div>
<div class="abs" style="left:203px;top:559px;width:687px;height:26px;background:#fff;border-radius:0 0 7px 7px"></div>
<div class="t" id="br" style="left:211.40px;top:564.35px;font-size:14px;color:#333;letter-spacing:0.9px;-webkit-text-stroke:0.2px #333;">{ }</div>
<div class="t" id="sel" style="left:238.20px;top:567.34px;font-size:12px;color:#555;letter-spacing:-0.2px;">7 characters selected</div>
<div class="t" id="cov" style="left:795.00px;top:565.84px;font-size:12px;color:#0b57d0;letter-spacing:-0.1px;">Coverage: n/a</div>
<div class="abs" style="left:382px;top:79px;width:106px;height:36px;border:3px solid #e11325"></div>
<div class="abs" style="left:316.3px;top:350.2px;width:98.8px;height:32.4px;border:3px solid #e11325"></div>
<div id="winb"></div>
</div>
</body>
</html>
